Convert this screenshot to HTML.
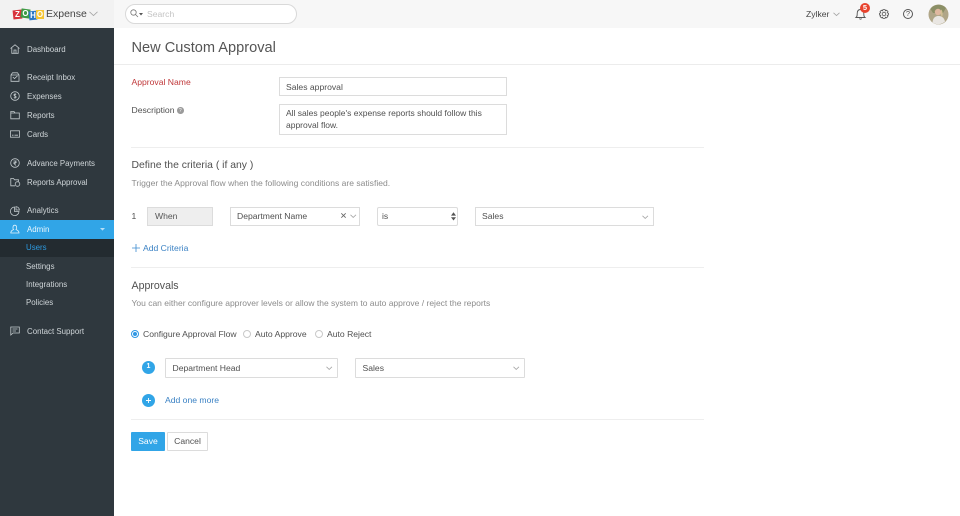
<!DOCTYPE html>
<html><head><meta charset="utf-8">
<style>
*{box-sizing:border-box}
html,body{margin:0;padding:0;width:960px;height:516px;overflow:hidden;background:#fff;font-family:"Liberation Sans",sans-serif;color:#505050}
.t{position:absolute;white-space:nowrap;font-size:8.6px;line-height:12px}
.s{color:#cfd5d8;font-size:7.9px}
.b{position:absolute;border:1px solid #dcdcdc;background:#fff}
.hr{position:absolute;height:1px;background:#eeeeee;left:131px;width:573px}
svg{position:absolute;overflow:visible}
.ic path,.ic rect,.ic circle{fill:none;stroke:#c3cacd;stroke-width:.8}
.ch path{fill:none;stroke:#a5a5a5;stroke-width:.8}
</style></head><body>
<!-- top bar -->
<div style="position:absolute;left:0;top:0;width:960px;height:28px;background:#f7f7f7"></div>
<div style="position:absolute;left:0;top:0;width:114px;height:28px;background:#f2f2f2"></div>
<!-- logo -->
<div style="position:absolute;left:13px;top:10px;width:9px;height:9px;background:#d8323c;transform:rotate(-6deg)"></div>
<div style="position:absolute;left:21px;top:9px;width:9px;height:9px;background:#3e9b46;transform:rotate(8deg)"></div>
<div style="position:absolute;left:29px;top:11px;width:8px;height:9px;background:#2b78c5;transform:rotate(-6deg)"></div>
<div style="position:absolute;left:36px;top:10px;width:8px;height:9px;background:#f5c533"></div>
<div class="t" style="left:13px;top:9px;width:9px;text-align:center;color:#fff;font-weight:bold;font-size:8px">Z</div>
<div class="t" style="left:21px;top:8px;width:9px;text-align:center;color:#fff;font-weight:bold;font-size:8px">O</div>
<div class="t" style="left:29px;top:10px;width:8px;text-align:center;color:#fff;font-weight:bold;font-size:8px">H</div>
<div class="t" style="left:36px;top:9px;width:8px;text-align:center;color:#fff;font-weight:bold;font-size:8px">O</div>
<div class="t" style="left:46px;top:8px;font-size:10.5px;line-height:13px;color:#444">Expense</div>
<svg class="ch" style="left:89px;top:11px" width="10" height="6"><path d="M.5 .8L4.5 4.6L8.5 .8"/></svg>
<!-- search -->
<div style="position:absolute;left:125px;top:4px;width:172px;height:20px;border:1px solid #d9d9d9;border-radius:10px;background:#fff"></div>
<svg style="left:130px;top:9px" width="9" height="9"><circle cx="3.5" cy="3.5" r="2.7" fill="none" stroke="#777" stroke-width=".8"/><path d="M5.5 5.5L8 8" stroke="#777" stroke-width=".8"/></svg>
<svg style="left:139px;top:13px" width="4" height="3"><path d="M0 0H4L2 2.5Z" fill="#555"/></svg>
<div class="t" style="left:147px;top:8px;color:#c4c4c4">Search</div>
<div class="t" style="left:806px;top:8px;color:#444">Zylker</div>
<svg class="ch" style="left:833px;top:12px" width="7" height="5"><path d="M.5 .8L3.5 3.6L6.5 .8"/></svg>
<!-- bell -->
<svg style="left:855px;top:8px" width="11" height="12"><path d="M1 9.5C2.2 8.5 2.2 7.5 2.2 5.5C2.2 3 3.5 1.5 5.5 1.5C7.5 1.5 8.8 3 8.8 5.5C8.8 7.5 8.8 8.5 10 9.5ZM4.4 10.5C4.8 11.4 6.2 11.4 6.6 10.5" fill="none" stroke="#555" stroke-width=".9"/></svg>
<div style="position:absolute;left:860px;top:3px;width:10px;height:10px;border-radius:50%;background:#e8432e"></div>
<div class="t" style="left:860px;top:2px;width:10px;text-align:center;color:#fff;font-size:7.5px;font-weight:bold">5</div>
<!-- gear -->
<svg style="left:879px;top:9px" width="10" height="10"><circle cx="5" cy="5" r="1.8" fill="none" stroke="#555" stroke-width=".8"/><path d="M4 .5H6L6.4 1.8L7.7 1.2L9 2.7L8.2 3.8L9.5 4.3V6L8.2 6.3L8.9 7.5L7.6 8.9L6.4 8.2L6 9.5H4L3.6 8.2L2.4 8.9L1.1 7.5L1.8 6.3L.5 6V4.3L1.8 3.8L1 2.7L2.3 1.2L3.6 1.8Z" fill="none" stroke="#555" stroke-width=".8"/></svg>
<!-- help -->
<div style="position:absolute;left:903px;top:9px;width:10px;height:10px;border:1px solid #555;border-radius:50%"></div>
<div class="t" style="left:903px;top:8px;width:10px;text-align:center;font-size:7.5px;color:#555">?</div>
<!-- avatar -->
<svg style="left:928px;top:4px" width="21" height="21"><circle cx="10.5" cy="10.5" r="10" fill="#b0a688"/><path d="M2.5 5A10 10 0 0 1 18 4L15 9L5 9Z" fill="#8b8f66"/><circle cx="10" cy="8" r="3.2" fill="#e0b8a0"/><path d="M4.5 18.5C5 13 8 12 10.5 12C13 12 16 13 17 17.5A10 10 0 0 1 4.5 18.5Z" fill="#e9e6e2"/><path d="M13 5.5C15 7 15 11 14 13L12.5 10Z" fill="#d2c094"/></svg>

<!-- sidebar -->
<div style="position:absolute;left:0;top:28px;width:114px;height:488px;background:#2f383e"></div>
<div style="position:absolute;left:0;top:220px;width:114px;height:19px;background:#31a5e7"></div>
<div style="position:absolute;left:0;top:239px;width:114px;height:18px;background:#232b30"></div>

<svg class="ic" style="left:10px;top:44px" width="10" height="10"><path d="M.5 4.5L5 .8L9.5 4.5M1.8 3.8V9.3H8.2V3.8M4 9.3V6H6V9.3"/></svg>
<svg class="ic" style="left:10px;top:72px" width="10" height="10"><path d="M1 3H9V9.3H1ZM1 3L2.5 .8H7.5L9 3M2.8 5L4.5 6.6L7.4 3.9"/></svg>
<svg class="ic" style="left:10px;top:91px" width="10" height="10"><circle cx="5" cy="5" r="4.3"/><path d="M6.2 3.5C5.5 2.8 3.9 3 3.9 4C3.9 5.2 6.2 4.8 6.2 6C6.2 7 4.5 7.2 3.8 6.5M5 2.3V7.7"/></svg>
<svg class="ic" style="left:10px;top:110px" width="10" height="10"><path d="M.8 1.5H4L5 3H9.3V8.8H.8ZM.8 3H5"/></svg>
<svg class="ic" style="left:10px;top:130px" width="10" height="8"><rect x=".5" y=".8" width="9" height="6.4"/><path d="M2 5.2H3.5M4.5 5.2H8"/></svg>
<svg class="ic" style="left:10px;top:158px" width="10" height="10"><circle cx="5" cy="5" r="4.3"/><path d="M3.5 3H6.6M3.5 4.5H6.6M4.5 3C6.5 3 6.5 5.5 4 5.5L6 7.5"/></svg>
<svg class="ic" style="left:10px;top:177px" width="11" height="10"><path d="M5 8.8H.8V1.5H3.5L4.5 2.8H8.5V4.5"/><circle cx="7.5" cy="7" r="2.3"/></svg>
<svg class="ic" style="left:10px;top:206px" width="10" height="10"><path d="M4.5 1A4.3 4.3 0 1 0 9 5.5H4.5ZM6 .6A3.6 3.6 0 0 1 9.4 4H6Z"/></svg>
<svg style="left:10px;top:224px" width="10" height="10"><path d="M.8 9C.8 6.8 2.5 6 3.5 5.6C2.6 4.8 2.6 1.2 4.8 1.2C7 1.2 7 4.8 6.1 5.6C7.2 6 9 6.8 9 9Z" fill="none" stroke="#e3f3fc" stroke-width=".8"/></svg>
<svg class="ic" style="left:10px;top:326px" width="10" height="10"><path d="M.8 1H9.3V7H3L.8 9ZM2.5 3H7.5M2.5 5H6"/></svg>
<svg style="left:100px;top:228px" width="5" height="3"><path d="M0 0H5L2.5 2.6Z" fill="#b5def6"/></svg>

<div class="t s" style="left:27px;top:44px">Dashboard</div>
<div class="t s" style="left:27px;top:72px">Receipt Inbox</div>
<div class="t s" style="left:27px;top:91px">Expenses</div>
<div class="t s" style="left:27px;top:110px">Reports</div>
<div class="t s" style="left:27px;top:129px">Cards</div>
<div class="t s" style="left:27px;top:158px">Advance Payments</div>
<div class="t s" style="left:27px;top:177px">Reports Approval</div>
<div class="t s" style="left:27px;top:205px">Analytics</div>
<div class="t" style="left:27px;top:224px;color:#eaf6fd;font-size:7.9px">Admin</div>
<div class="t" style="left:26px;top:242px;color:#2d9ae0;font-size:7.9px">Users</div>
<div class="t s" style="left:26px;top:261px">Settings</div>
<div class="t s" style="left:26px;top:279px">Integrations</div>
<div class="t s" style="left:26px;top:297px">Policies</div>
<div class="t s" style="left:27px;top:326px">Contact Support</div>

<!-- header -->
<div class="t" style="left:131.5px;top:39px;font-size:14.6px;line-height:18px;color:#555">New Custom Approval</div>
<div style="position:absolute;left:114px;top:64px;width:846px;height:1px;background:#ececec"></div>

<!-- form -->
<div class="t" style="left:131.5px;top:76px;color:#c0393b">Approval Name</div>
<div class="b" style="left:279px;top:77px;width:228px;height:19px"></div>
<div class="t" style="left:286px;top:81px">Sales approval</div>
<div class="t" style="left:131.5px;top:104px">Description</div>
<div style="position:absolute;left:177px;top:107px;width:6.5px;height:6.5px;border-radius:50%;background:#9b9b9b"></div>
<div class="t" style="left:177px;top:105px;width:6.5px;text-align:center;font-size:5px;color:#fff">?</div>
<div class="b" style="left:279px;top:104px;width:228px;height:31px"></div>
<div class="t" style="left:286px;top:107px;font-size:8.5px">All sales people's expense reports should follow this</div>
<div class="t" style="left:286px;top:119px;font-size:8.5px">approval flow.</div>
<div class="hr" style="top:147px"></div>

<div class="t" style="left:131.5px;top:159px;font-size:10.4px;line-height:14px">Define the criteria ( if any )</div>
<div class="t" style="left:131.5px;top:177px;color:#8c8c8c;font-size:8.55px">Trigger the Approval flow when the following conditions are satisfied.</div>

<div class="t" style="left:131.5px;top:210px">1</div>
<div class="b" style="left:147px;top:207px;width:66px;height:19px;background:#eeeeee"></div>
<div class="t" style="left:155px;top:210px;color:#555">When</div>
<div class="b" style="left:230px;top:207px;width:130px;height:19px"></div>
<div class="t" style="left:237px;top:210px">Department Name</div>
<svg style="left:341px;top:213px" width="5" height="5"><path d="M.3 .3L4.7 4.7M4.7 .3L.3 4.7" stroke="#666" stroke-width=".8"/></svg>
<svg class="ch" style="left:350px;top:214px" width="7" height="5"><path d="M.5 .8L3.2 3.4L6 .8"/></svg>
<div class="b" style="left:377px;top:207px;width:81px;height:19px;border-radius:2px"></div>
<div class="t" style="left:382px;top:210px">is</div>
<svg style="left:451px;top:212px" width="5" height="9"><path d="M0 3.6L2.5 .3L5 3.6ZM0 5.2L2.5 8.5L5 5.2Z" fill="#555"/></svg>
<div class="b" style="left:475px;top:207px;width:179px;height:19px"></div>
<div class="t" style="left:482px;top:210px">Sales</div>
<svg class="ch" style="left:642px;top:215px" width="7" height="5"><path d="M.5 .8L3.2 3.4L6 .8"/></svg>

<svg style="left:131.5px;top:244px" width="8" height="8"><path d="M4 0V8M0 4H8" stroke="#3b8ad0" stroke-width=".8"/></svg>
<div class="t" style="left:143px;top:242px;color:#3b82c4">Add Criteria</div>
<div class="hr" style="top:267px"></div>

<div class="t" style="left:131.5px;top:279px;font-size:10.6px;line-height:14px">Approvals</div>
<div class="t" style="left:131.5px;top:297px;color:#8c8c8c;font-size:8.5px">You can either configure approver levels or allow the system to auto approve / reject the reports</div>

<div style="position:absolute;left:131px;top:330px;width:8px;height:8px;border-radius:50%;border:1px solid #2f97e3;background:#fff"></div>
<div style="position:absolute;left:133px;top:332px;width:4px;height:4px;border-radius:50%;background:#2f97e3"></div>
<div class="t" style="left:143px;top:328px">Configure Approval Flow</div>
<div style="position:absolute;left:243px;top:330px;width:8px;height:8px;border-radius:50%;border:1px solid #c9c9c9"></div>
<div class="t" style="left:255px;top:328px">Auto Approve</div>
<div style="position:absolute;left:315px;top:330px;width:8px;height:8px;border-radius:50%;border:1px solid #c9c9c9"></div>
<div class="t" style="left:327px;top:328px">Auto Reject</div>

<div style="position:absolute;left:142px;top:361px;width:13px;height:13px;border-radius:50%;background:#31a5e7"></div>
<div class="t" style="left:142px;top:361px;width:13px;text-align:center;color:#fff;font-size:7px;font-weight:bold">1</div>
<div class="b" style="left:165px;top:358px;width:173px;height:20px;border-radius:1px"></div>
<div class="t" style="left:172.5px;top:362px">Department Head</div>
<svg class="ch" style="left:326px;top:366px" width="7" height="5"><path d="M.5 .8L3.2 3.4L6 .8"/></svg>
<div class="b" style="left:355px;top:358px;width:170px;height:20px;border-radius:1px"></div>
<div class="t" style="left:362.5px;top:362px">Sales</div>
<svg class="ch" style="left:513px;top:366px" width="7" height="5"><path d="M.5 .8L3.2 3.4L6 .8"/></svg>

<div style="position:absolute;left:142px;top:394px;width:13px;height:13px;border-radius:50%;background:#31a5e7"></div>
<svg style="left:146px;top:398px" width="5" height="5"><path d="M2.5 0V5M0 2.5H5" stroke="#fff" stroke-width=".9"/></svg>
<div class="t" style="left:165px;top:394px;color:#3b82c4">Add one more</div>
<div class="hr" style="top:419px"></div>

<div style="position:absolute;left:131px;top:432px;width:34px;height:19px;background:#31a5e7;border-radius:1px"></div>
<div class="t" style="left:131px;top:435px;width:34px;text-align:center;color:#fff">Save</div>
<div class="b" style="left:167px;top:432px;width:41px;height:19px;border-radius:1px"></div>
<div class="t" style="left:167px;top:435px;width:41px;text-align:center">Cancel</div>
</body></html>
